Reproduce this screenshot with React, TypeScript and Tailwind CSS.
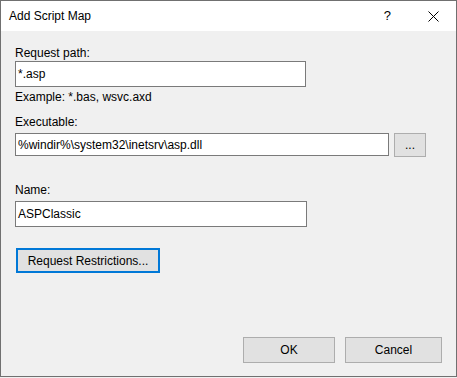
const font = { fontFamily: '"Segoe UI", "Liberation Sans", Arial, sans-serif' };

function TextBox({ value, className }: { value: string; className: string }) {
  return (
    <div className={`flex items-center border border-[#7a7a7a] bg-white pl-[2px] text-[12px] leading-4 text-black ${className}`}>
      {value}
    </div>
  );
}

function DlgButton({ label, className, focused }: { label: string; className: string; focused?: boolean }) {
  return (
    <button
      className={`flex items-center justify-center bg-[#e1e1e1] text-[12px] leading-4 text-black ${
        focused ? "border-2 border-[#0078d7]" : "border border-[#adadad]"
      } ${className}`}
    >
      {label}
    </button>
  );
}

export default function App() {
  return (
    <div className="h-[378px] w-[457px] bg-[#f0f0f0]" style={font}>
      <div className="flex h-[377px] w-[457px] flex-col border border-[#707070] bg-[#f0f0f0]">
        {/* Title bar */}
        <div className="flex h-[30px] items-center bg-white pl-[8px] text-[12px] leading-4 text-black">
          <span>Add Script Map</span>
          <span className="ml-auto mr-[37px] text-[13px]">?</span>
          <svg width="11" height="11" viewBox="0 0 11 11" className="mr-[17px]">
            <path d="M0.5 0.5 L10.5 10.5 M10.5 0.5 L0.5 10.5" stroke="#000" strokeWidth="1" />
          </svg>
        </div>

        {/* Body */}
        <div className="flex flex-1 flex-col pl-[14px] pr-[14px] text-[12px] leading-4 text-black">
          <p className="mt-[14px] h-4">Request path:</p>
          <TextBox value="*.asp" className="h-[26px] w-[291px]" />
          <p className="mt-[2px] h-4">Example: *.bas, wsvc.axd</p>

          <p className="mt-[9px] h-4">Executable:</p>
          <div className="mt-[3px] flex items-start">
            <TextBox value="%windir%\system32\inetsrv\asp.dll" className="h-[23px] w-[374px]" />
            <DlgButton label="..." className="ml-[5px] h-[24px] w-[32px]" />
          </div>

          <p className="mt-[25px] h-4">Name:</p>
          <TextBox value="ASPClassic" className="mt-[3px] h-[26px] w-[292px]" />

          <DlgButton label="Request Restrictions..." focused className="ml-px mt-[21px] h-[25px] w-[144px]" />

          <div className="mt-[64px] flex justify-end gap-[10px]">
            <DlgButton label="OK" className="h-[26px] w-[92px]" />
            <DlgButton label="Cancel" className="h-[26px] w-[97px]" />
          </div>
        </div>
      </div>
    </div>
  );
}
